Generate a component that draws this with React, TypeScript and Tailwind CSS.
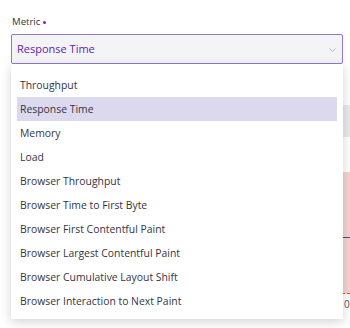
import { useState } from "react";

const metrics = [
  "Throughput",
  "Response Time",
  "Memory",
  "Load",
  "Browser Throughput",
  "Browser Time to First Byte",
  "Browser First Contentful Paint",
  "Browser Largest Contentful Paint",
  "Browser Cumulative Layout Shift",
  "Browser Interaction to Next Paint",
];

export default function App() {
  const [selected] = useState("Response Time");

  return (
    <div
      className="relative h-[328px] w-[350px] overflow-hidden bg-white"
      style={{ fontFamily: '"Open Sans", "Noto Sans", sans-serif' }}
    >
      <div className="pl-[11px] pt-[15px]">
        {/* Field label */}
        <label className="flex h-[15px] items-center gap-[3px] pl-[1px] text-[9.6px] font-medium text-[#34343f]">
          Metric
          <span className="h-[3px] w-[3px] rounded-full bg-[#6b2fb3]" />
        </label>

        {/* Select trigger */}
        <div className="relative mr-[7px] mt-[4px]">
          <button className="flex h-[30px] w-full items-center justify-between rounded-[2px] border border-[#9477cc] bg-[#f4f4f7] pl-[5px] pr-[6px] pt-[1px] text-left">
            <span className="text-[11px] text-[#5c24a8]">{selected}</span>
            <svg width="7" height="4" viewBox="0 0 7 4" fill="none">
              <path d="M0.5 0.5l3 3 3-3" stroke="#b8b8c2" strokeWidth="1" />
            </svg>
          </button>

          {/* Dropdown menu */}
          <ul className="absolute left-0 right-0 top-[30px] z-10 bg-white px-[6px] pb-[6px] pt-[9px] shadow-[0_3px_10px_rgba(0,0,0,0.18)]">
            {metrics.map((m) => (
              <li
                key={m}
                className={
                  "flex h-[24px] items-center pl-[3px] pt-[1px] text-[10.4px] text-[#34343f] " +
                  (m === selected ? "bg-[#dcd9ef]" : "")
                }
              >
                {m}
              </li>
            ))}
          </ul>
        </div>

        {/* Content behind the menu */}
        <div className="mt-[41px] h-[32px] bg-[#e9e9ee]" />
        <div className="mt-[35px] h-[122px] border-b border-dashed border-[#e0552e] bg-[#f6d3d3] pt-[65px]">
          <div className="h-[1px] bg-[#4a4f8a]" />
        </div>
        <div className="mt-[3px] pl-[333px] text-[10px] text-[#555]">00</div>
      </div>
    </div>
  );
}
